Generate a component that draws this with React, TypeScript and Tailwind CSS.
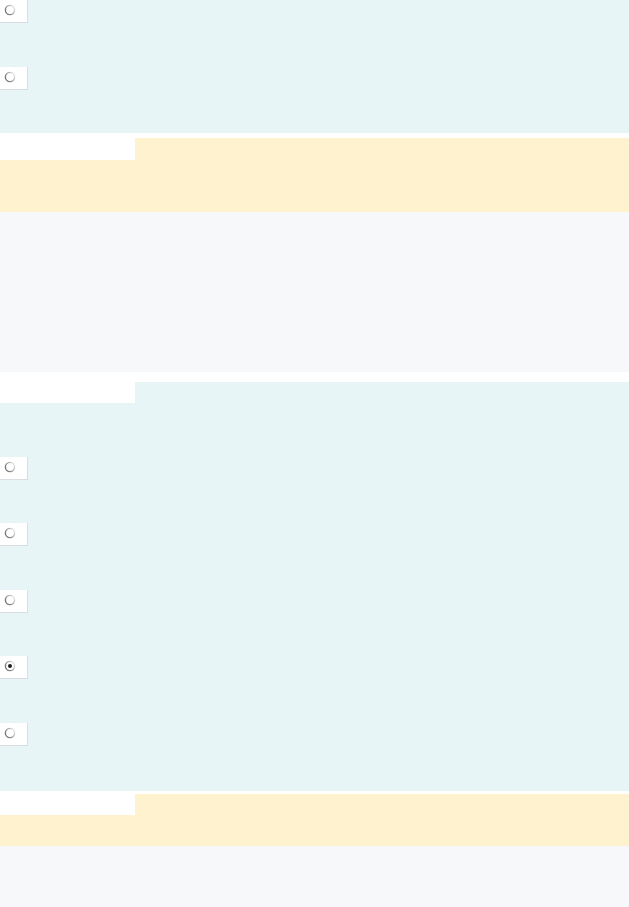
import React from "react";

function Radio({ checked = false }: { checked?: boolean }) {
  const id = checked ? "rg1" : "rg0";
  return (
    <div className="w-[28px] h-[23px] bg-white border-r border-b border-[#d9dee2] flex items-start justify-start pl-[4px] pt-[4px]">
      <svg width="12" height="12" viewBox="0 0 12 12">
        <defs>
          <linearGradient id={id} x1="0" y1="0.7" x2="1" y2="0.1">
            <stop offset="0" stopColor="#6f6f6f" />
            <stop offset="0.55" stopColor="#a8a8a8" />
            <stop offset="1" stopColor="#f2f2f2" />
          </linearGradient>
        </defs>
        <circle cx="6" cy="6" r="4.6" fill="#ffffff" stroke={`url(#${id})`} strokeWidth="1.4" />
        {checked && <circle cx="6" cy="6" r="2" fill="#1e1e1e" />}
      </svg>
    </div>
  );
}

function Row({ checked = false, h }: { checked?: boolean; h: string }) {
  return (
    <div className={h}>
      <Radio checked={checked} />
    </div>
  );
}

function Tab({ gap, tabH, color }: { gap: string; tabH: string; color: string }) {
  return (
    <div className="flex bg-white">
      <div className={`w-[135px] ${tabH} bg-white`} />
      <div className="flex-1 flex flex-col">
        <div className={gap} />
        <div className={`flex-1 ${color}`} />
      </div>
    </div>
  );
}

export default function App() {
  return (
    <div className="w-[629px] h-[907px] overflow-hidden bg-white flex flex-col">
      <div className="bg-[#e7f5f7] h-[133px] flex flex-col">
        <Row h="h-[67px]" />
        <Row h="h-[66px]" />
      </div>
      <div className="h-[1px] bg-white" />
      <Tab gap="h-[4px]" tabH="h-[26px]" color="bg-[#fff2cf]" />
      <div className="h-[52px] bg-[#fff2cf]" />
      <div className="h-[160px] bg-[#f7f8fa]" />
      <Tab gap="h-[10px]" tabH="h-[31px]" color="bg-[#e7f5f7]" />
      <div className="bg-[#e7f5f7] h-[388px] flex flex-col pt-[54px]">
        <Row h="h-[66px]" />
        <Row h="h-[67px]" />
        <Row h="h-[66px]" />
        <Row h="h-[67px]" checked />
        <Row h="h-[66px]" />
      </div>
      <Tab gap="h-[3px]" tabH="h-[24px]" color="bg-[#fff2cf]" />
      <div className="h-[31px] bg-[#fff2cf]" />
      <div className="flex-1 bg-[#f7f8fa]" />
    </div>
  );
}
